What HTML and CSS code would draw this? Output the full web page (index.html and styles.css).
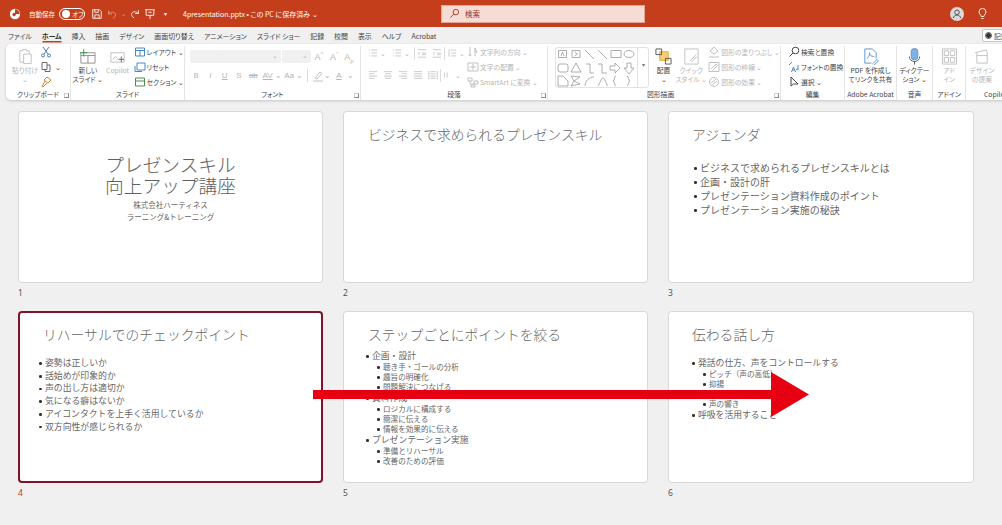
FILE: index.html
```html
<!DOCTYPE html>
<html lang="ja">
<head>
    <meta charset="UTF-8">
    <title>4presentation.pptx - PowerPoint</title>
    <link rel="stylesheet" href="styles.css">
</head>
<body>
    <!-- title bar -->
    <div class="titlebar">
        <svg class="qa logo" viewBox="0 0 14 14"><circle cx="7" cy="7" r="6" fill="#fff"/><path d="M7 7V1.5A5.5 5.5 0 0 1 12.5 7z" fill="#c43e1c"/><circle cx="6" cy="7.5" r="2" fill="#c43e1c"/></svg>
        <span class="autosave">自動保存</span>
        <span class="toggle"><i class="knob"></i>オフ</span>
        <svg class="qa save" viewBox="0 0 14 14"><path d="M2 2h8l2 2v8H2zM4.5 2v3h4V2M4.500 12V8h5v4"/></svg>
        <svg class="qa undo dim" viewBox="0 0 14 14"><path d="M3 3v4h4M3 7c2-3 8-3 8 1 0 2-1 3-3 4"/></svg>
        <span class="tiny-arrow dim">⌄</span>
        <svg class="qa redo" viewBox="0 0 14 14"><path d="M11 2.5v4H7M11 6.5c-2-3-8-3-8 1 0 2 1 3 3 4"/></svg>
        <svg class="qa present" viewBox="0 0 14 14"><path d="M1.5 2h11M2.5 2v6.500h9V2M7 8.500V13M5 5h4"/></svg>
        <span class="tiny-arrow more">▾</span>
        <span class="filename">4presentation.pptx • この PC に保存済み ⌄</span>
        <div class="search">
            <svg class="search-icon" viewBox="0 0 12 12"><circle cx="7.5" cy="4.5" r="3"/><path d="M5.3 6.7 1.5 10.5"/></svg>
            <span>検索</span>
        </div>
        <div class="title-right">
            <svg class="avatar" viewBox="0 0 14 14"><circle cx="7" cy="7" r="7" fill="#d9d9d9"/><circle cx="7" cy="5.3" r="2.3" fill="none" stroke="#555"/><path d="M3.3 11c.5-2 2-2.900 3.700-2.900s3.200.9 3.700 2.900" fill="none" stroke="#555"/></svg>
            <svg class="bulb" viewBox="0 0 12 14"><path d="M6 1.5a3.800 3.800 0 0 1 3.800 3.800c0 2-2 3-2.300 5H4.500c-.3-2-2.300-3-2.300-5A3.800 3.800 0 0 1 6 1.500zM4.800 12.500h2.400"/></svg>
        </div>
    </div>

    <!-- tabs -->
    <div class="tabs">
        <span>ファイル</span>
        <span class="active">ホーム</span>
        <span>挿入</span>
        <span>描画</span>
        <span>デザイン</span>
        <span>画面切り替え</span>
        <span>アニメーション</span>
        <span>スライド ショー</span>
        <span>記録</span>
        <span>校閲</span>
        <span>表示</span>
        <span>ヘルプ</span>
        <span>Acrobat</span>
        <div class="record"><i class="record-dot"></i>記録</div>
    </div>

    <!-- ribbon -->
    <div class="ribbon">
        <div class="group g-clip">
            <div class="group-body">
                <div class="big off w-paste">
                    <svg class="ic-big" viewBox="0 0 18 18"><path d="M3 3h3V1.500h4V3h3v3M3 3v12h4M7 6.500h8V16.500H7z"/></svg>
                    <span class="big-text">貼り付け<br>⌄</span>
                </div>
                <div class="stack clip-stack">
                    <svg class="ic cut" viewBox="0 0 12 12"><path d="M3 1l5 7M9 1L4 8"/><circle cx="3" cy="9.500" r="1.500"/><circle cx="9" cy="9.500" r="1.500"/></svg>
                    <div class="row"><svg class="ic off-ic" viewBox="0 0 12 12"><path d="M2 1.500h5v7H2zM7 4h3v6.500H5v-2"/></svg><span class="chev">⌄</span></div>
                    <svg class="ic brush" viewBox="0 0 12 12"><path d="M7 1l4 3-3 3-4-3zM5 5 2 10.500l1 .5 4-4"/></svg>
                </div>
            </div>
            <div class="group-label">クリップボード<i class="launcher"></i></div>
        </div>

        <div class="group g-slide">
            <div class="group-body">
                <div class="big w-new">
                    <svg class="ic-big new-ic" viewBox="0 0 18 18"><path d="M2 5h15v11H2zM2 8h15M9.500 8v8"/><path class="green" d="M5 1v8M1 5h8"/></svg>
                    <span class="big-text">新しい<br>スライド ⌄</span>
                </div>
                <div class="big off w-copilot">
                    <svg class="ic-big" viewBox="0 0 18 18"><path d="M2 5h14v10H2zM4 12l3-3 2 2"/><path class="dark" d="M13 9v6M10 12h6"/></svg>
                    <span class="big-text">Copilot</span>
                </div>
                <div class="stack slide-stack">
                    <div class="row"><svg class="ic blue" viewBox="0 0 12 12"><path d="M1.500 2h9v8h-9zM1.500 4.500h9M6 4.500V10"/></svg>レイアウト ⌄</div>
                    <div class="row"><svg class="ic blue" viewBox="0 0 12 12"><path d="M3 2h8v7H3zM1 5v5.500h7"/></svg>リセット</div>
                    <div class="row"><svg class="ic green-ic" viewBox="0 0 12 12"><path d="M1.500 2h9v8h-9zM1.500 5h9"/></svg>セクション ⌄</div>
                </div>
            </div>
            <div class="group-label">スライド</div>
        </div>

        <div class="group g-font off-body">
            <div class="group-body column">
                <div class="row font-top">
                    <span class="combo c-name">⌄</span>
                    <span class="combo c-size">⌄</span>
                    <span class="f-btn">A<sup>^</sup></span>
                    <span class="f-btn">A<sup>ˇ</sup></span>
                    <span class="f-btn">A<sub>p</sub></span>
                </div>
                <div class="row font-bottom">
                    <b>B</b><i>I</i><u>U</u><span>S</span><s>ab</s><span class="under">AV</span><span class="narrow">⌄</span><span class="aa">Aa ⌄</span><em class="sep"></em>
                    <svg class="ic" viewBox="0 0 12 12"><path d="M3 8l5-6 2 1.500L5 9zM1 11h10"/></svg><span class="narrow">⌄</span>
                    <span class="under">A</span><span class="narrow">⌄</span>
                </div>
            </div>
            <div class="group-label">フォント<i class="launcher"></i></div>
        </div>

        <div class="group g-para off-body">
            <div class="group-body">
                <div class="para-left">
                    <div class="row para-row">
                        <svg class="ic" viewBox="0 0 12 12"><path d="M1 2.500h1M4 2.500h7M1 6h1M4 6h7M1 9.500h1M4 9.500h7"/></svg><span class="chev chev-gap">⌄</span>
                        <svg class="ic" viewBox="0 0 12 12"><path d="M1 2.500h1M4 2.500h7M1 6h1M4 6h7M1 9.500h1M4 9.500h7"/></svg><span class="chev">⌄</span>
                        <em class="sep"></em>
                        <svg class="ic" viewBox="0 0 12 12"><path d="M1 2h10M6 6h5M6 8h5M1 11h10M3.500 5 1.500 6.500l2 1.500"/></svg>
                        <svg class="ic" viewBox="0 0 12 12"><path d="M1 2h10M6 6h5M6 8h5M1 11h10M1.500 5l2 1.500-2 1.500"/></svg>
                        <em class="sep"></em>
                        <svg class="ic" viewBox="0 0 12 12"><path d="M5 2.500h6M5 6h6M5 9.500h6M2.500 1.500v9"/></svg><span class="chev">⌄</span>
                    </div>
                    <div class="row para-row">
                        <svg class="ic" viewBox="0 0 12 12"><path d="M1 2h10M1 4.700h7M1 7.400h10M1 10h7"/></svg>
                        <svg class="ic" viewBox="0 0 12 12"><path d="M1 2h10M2.500 4.700h7M1 7.400h10M2.500 10h7"/></svg>
                        <svg class="ic" viewBox="0 0 12 12"><path d="M1 2h10M4 4.700h7M1 7.400h10M4 10h7"/></svg>
                        <svg class="ic" viewBox="0 0 12 12"><path d="M1 2h10M1 4.700h10M1 7.400h10M1 10h10"/></svg>
                        <svg class="ic" viewBox="0 0 12 12"><path d="M1 1v10M11 1v10M3 2h6M3 4.700h6M3 7.400h6M3 10h6"/></svg>
                        <em class="sep"></em>
                        <svg class="ic" viewBox="0 0 12 12"><path d="M2 3v6M5 3v6"/></svg><span class="chev">⌄</span>
                    </div>
                </div>
                <div class="stack">
                    <div class="row"><svg class="ic" viewBox="0 0 12 12"><path d="M3 1v9M1.500 8.500 3 10l1.500-1.500M8 10V2l2 5"/></svg>文字列の方向 ⌄</div>
                    <div class="row"><svg class="ic" viewBox="0 0 12 12"><path d="M1 2h10v8H1zM3 6h6M6 3v6"/></svg>文字の配置 ⌄</div>
                    <div class="row"><svg class="ic" viewBox="0 0 12 12"><path d="M1 2h4v3H1zM7 5h4v3H7zM3 5v3h4M4 9h4v2H4z"/></svg>SmartArt に変換 ⌄</div>
                </div>
            </div>
            <div class="group-label">段落<i class="launcher"></i></div>
        </div>

        <div class="group g-shape">
            <div class="group-body">
                <div class="gallery">
                    <svg class="gallery-shapes" viewBox="0 0 78 39">
                        <path d="M1.500 2.500h8v7h-8zM4 8l1.500-4L7 8M15 2.500h8v7h-8zM17.500 4l3 2-3 2M28 2l9 9M41 2l9 9M54 2.500h10v7H54z"/>
                        <ellipse cx="72" cy="6" rx="5" ry="3.500"/>
                        <rect x="1" y="16" width="10" height="8" rx="2"/>
                        <path d="M19 15l5 9H14zM29 16h4v9h4M41 16h4v9h5M53 18h5v-3l5 5-5 5v-3h-5zM70 15h4v5h3l-5 6-5-6h3z"/>
                        <path d="M1 28h5l5 5v5H1zM14 28l9 1-6 4 6 3-9 2 3-5zM28 38c0-5 4-9 9-9M41 38c2-2 3-8 5-8s3 6 5 8M59 28c-2 0-1 5-3 5 2 0 1 5 3 5M70 28c2 0 1 5 3 5-2 0-1 5-3 5"/>
                    </svg>
                    <div class="gallery-scroll">▾</div>
                </div>
                <div class="big w-arrange">
                    <svg class="ic-big arrange" viewBox="0 0 18 18"><rect class="gold" x="5" y="4" width="9" height="9"/><path d="M1 1h6v6H1zM11 11h6v6h-6z"/></svg>
                    <span class="big-text">配置<br>⌄</span>
                </div>
                <div class="big off w-quick">
                    <svg class="ic-big" viewBox="0 0 18 18"><path d="M2 1h14v16H2zM7 14l7-7M9 15l6-6"/></svg>
                    <span class="big-text">クイック<br>スタイル ⌄</span>
                </div>
                <div class="stack shape-stack off">
                    <div class="row"><svg class="ic" viewBox="0 0 12 12"><path d="M6 1l4 4-4 3-4-3zM1 11h10"/></svg>図形の塗りつぶし ⌄</div>
                    <div class="row"><svg class="ic" viewBox="0 0 12 12"><path d="M1 1.500h10v9H1zM3 8l5-5 1.500 1.500-5 5"/></svg>図形の枠線 ⌄</div>
                    <div class="row"><svg class="ic" viewBox="0 0 12 12"><circle cx="6" cy="6" r="4.500"/><path d="M3 7l5-4M4 9l5-4"/></svg>図形の効果 ⌄</div>
                </div>
            </div>
            <div class="group-label shape-label">図形描画<i class="launcher"></i></div>
        </div>

        <div class="group g-edit">
            <div class="group-body">
                <div class="stack edit-stack">
                    <div class="row"><svg class="ic dark-ic" viewBox="0 0 12 12"><circle cx="7.500" cy="4.500" r="3.300"/><path d="M5 7 1.500 10.500"/></svg>検索と置換</div>
                    <div class="row"><svg class="ic blue" viewBox="0 0 12 12"><path d="M1 4l3-3M3.500 11l2-5 2 5M4.500 9h2M10 4v5l-2-1"/></svg>フォントの置換</div>
                    <div class="row"><svg class="ic dark-ic" viewBox="0 0 12 12"><path d="M3 1v9l2.500-2H10z"/></svg>選択 ⌄</div>
                </div>
            </div>
            <div class="group-label">編集</div>
        </div>

        <div class="group g-adobe">
            <div class="group-body center">
                <div class="big">
                    <svg class="ic-big pdf" viewBox="0 0 18 18"><path d="M3 1h8l4 4v6M3 1v15h7M5 11c2-1 3-3 3-6 0 3 2 4 5 4M11 17l5-5 1.500 1.500-5 5"/></svg>
                    <span class="big-text">PDF を作成し<br>てリンクを共有</span>
                </div>
            </div>
            <div class="group-label">Adobe Acrobat</div>
        </div>

        <div class="group g-voice">
            <div class="group-body center">
                <div class="big">
                    <svg class="ic-big mic" viewBox="0 0 18 18"><rect x="5.500" y="0.500" width="7" height="12" rx="3.500" fill="#7fb2e5" stroke="#5a93cf"/><path d="M3.500 9c0 7 11 7 11 0M9 14v3.500"/></svg>
                    <span class="big-text">ディクテー<br>ション ⌄</span>
                </div>
            </div>
            <div class="group-label">音声</div>
        </div>

        <div class="group g-addin off-body">
            <div class="group-body center">
                <div class="big">
                    <svg class="ic-big" viewBox="0 0 18 18"><path d="M1.500 1h15v16h-15zM3.500 3h4.500v5H3.500zM10 3h4.500v5H10zM3.500 10h4.500v5H3.500zM10 10h4.500v5H10z"/></svg>
                    <span class="big-text">アド<br>イン</span>
                </div>
            </div>
            <div class="group-label label-on">アドイン</div>
        </div>

        <div class="group g-copilot off-body">
            <div class="group-body">
                <div class="big w-design">
                    <svg class="ic-big" viewBox="0 0 18 18"><path d="M1 5l12-3 1 3v11H3V5M3 8h11"/></svg>
                    <span class="big-text">デザイン<br>の提案</span>
                </div>
                <div class="big w-copilot2">
                    <svg class="ic-big" viewBox="0 0 18 18"><circle cx="9" cy="9" r="7"/></svg>
                    <span class="big-text">Copilot</span>
                </div>
            </div>
            <div class="group-label label-on copilot-label">Copilot</div>
        </div>
    </div>

    <!-- slide sorter -->
    <div class="sorter">
        <div class="item">
            <div class="slide slide-cover">
                <div class="cover-title">プレゼンスキル<br>向上アップ講座</div>
                <div class="cover-sub">株式会社ハーティネス<br>ラーニング&amp;トレーニング</div>
            </div>
            <div class="num">1</div>
        </div>
        <div class="item">
            <div class="slide">
                <div class="slide-title">ビジネスで求められるプレゼンスキル</div>
            </div>
            <div class="num">2</div>
        </div>
        <div class="item">
            <div class="slide">
                <div class="slide-title">アジェンダ</div>
                <ul class="list list-agenda">
                    <li>ビジネスで求められるプレゼンスキルとは</li>
                    <li>企画・設計の肝</li>
                    <li>プレゼンテーション資料作成のポイント</li>
                    <li>プレゼンテーション実施の秘訣</li>
                </ul>
            </div>
            <div class="num">3</div>
        </div>
        <div class="item selected">
            <div class="slide">
                <div class="slide-title">リハーサルでのチェックポイント</div>
                <ul class="list list-check">
                    <li>姿勢は正しいか</li>
                    <li>話始めが印象的か</li>
                    <li>声の出し方は適切か</li>
                    <li>気になる癖はないか</li>
                    <li>アイコンタクトを上手く活用しているか</li>
                    <li>双方向性が感じられるか</li>
                </ul>
            </div>
            <div class="num">4</div>
        </div>
        <div class="item">
            <div class="slide">
                <div class="slide-title">ステップごとにポイントを絞る</div>
                <ul class="list list-steps">
                    <li>企画・設計</li>
                    <li class="sub">聴き手・ゴールの分析</li>
                    <li class="sub">趣旨の明確化</li>
                    <li class="sub">問題解決につなげる</li>
                    <li>資料作成</li>
                    <li class="sub">ロジカルに構成する</li>
                    <li class="sub">簡潔に伝える</li>
                    <li class="sub">情報を効果的に伝える</li>
                    <li>プレゼンテーション実施</li>
                    <li class="sub">準備とリハーサル</li>
                    <li class="sub">改善のための評価</li>
                </ul>
            </div>
            <div class="num">5</div>
        </div>
        <div class="item">
            <div class="slide">
                <div class="slide-title">伝わる話し方</div>
                <ul class="list list-talk">
                    <li>発話の仕方、声をコントロールする</li>
                    <li class="sub">ピッチ（声の高低）</li>
                    <li class="sub">抑揚</li>
                    <li class="sub">強調</li>
                    <li class="sub">声の響き</li>
                    <li>呼吸を活用すること</li>
                </ul>
            </div>
            <div class="num">6</div>
        </div>
    </div>

    <!-- red arrow lying over the slides -->
    <svg class="big-arrow" viewBox="0 0 496 45"><path d="M0 18h458V0l38 22.500L458 45V27H0z"/></svg>
</body>
</html>
```

FILE: styles.css
```css
* {
    margin: 0;
    padding: 0;
    box-sizing: border-box;
}

body {
    width: 1002px;
    height: 525px;
    overflow: hidden;
    position: relative;
    background: #f0f0f0;
    font-family: "Noto Sans CJK JP", "Noto Sans", sans-serif;
    font-size: 7px;
    color: #444;
    display: flex;
    flex-direction: column;
}

svg {
    flex: none;
    display: block;
}

/* title bar */
.titlebar {
    height: 27px;
    flex: none;
    background: #c43e1c;
    color: #fff;
    display: flex;
    align-items: center;
    font-feature-settings: "palt";
    font-size: 6.5px;
}

.qa {
    width: 12px;
    height: 12px;
    fill: none;
    stroke: #fff;
}

.logo {
    margin-left: 9px;
    stroke: none;
}

.autosave {
    margin-left: 8px;
    width: 30px;
}

.toggle {
    width: 26px;
    height: 12px;
    border: 1px solid #fff;
    border-radius: 6px;
    display: flex;
    align-items: center;
    gap: 2px;
    padding-left: 2px;
    white-space: nowrap;
}

.knob {
    flex: none;
    width: 8px;
    height: 8px;
    border-radius: 50%;
    background: #fff;
}

.save {
    margin-left: 6px;
}

.undo {
    margin-left: 3px;
}

.dim {
    opacity: 0.5;
}

.tiny-arrow {
    width: 11px;
    text-align: center;
    font-size: 6px;
}

.present {
    margin-left: 3px;
}

.more {
    margin-left: 4px;
}

.filename {
    margin-left: 12px;
    width: 258px;
    font-size: 7px;
}

.search {
    width: 204px;
    height: 18px;
    background: #f6dcd5;
    border: 1px solid #e2a897;
    color: #9c3418;
    display: flex;
    align-items: center;
    gap: 5px;
    padding-left: 7px;
    font-size: 7.5px;
}

.search-icon {
    width: 11px;
    height: 11px;
    fill: none;
    stroke: #a33a1e;
}

.title-right {
    margin-left: auto;
    display: flex;
    align-items: center;
    gap: 13px;
    padding-right: 14px;
}

.avatar {
    width: 14px;
    height: 14px;
}

.bulb {
    width: 11px;
    height: 13px;
    fill: none;
    stroke: #fff;
}

/* tabs */
.tabs {
    height: 17px;
    flex: none;
    display: flex;
    align-items: center;
    gap: 10px;
    padding-left: 8px;
    font-size: 6.9px;
    font-feature-settings: "palt";
    color: #444;
    position: relative;
}

.tabs .active {
    font-weight: 700;
    color: #333;
    box-shadow: 0 2px 0 -0.5px #c43e1c;
}

.record {
    position: absolute;
    left: 982px;
    top: 2px;
    width: 40px;
    height: 13px;
    background: #fff;
    border: 1px solid #c8c8c8;
    border-radius: 2px;
    display: flex;
    align-items: center;
    gap: 2px;
    padding-left: 2px;
}

.record-dot {
    width: 7px;
    height: 7px;
    border-radius: 50%;
    background: #333;
    border: 1.5px solid #fff;
    outline: 1px solid #555;
    outline-offset: -1px;
}

/* ribbon */
.ribbon {
    height: 56px;
    width: 1010px;
    flex: none;
    margin-left: 6px;
    background: #fff;
    border-radius: 5px;
    box-shadow: 0 1px 3px rgba(0,0,0,0.18);
    display: flex;
    padding-top: 2px;
    font-size: 6.8px;
    font-feature-settings: "palt";
}

.group {
    display: flex;
    flex-direction: column;
    flex: none;
    border-right: 1px solid #e4e4e4;
}

.group-body {
    flex: 1;
    display: flex;
    min-height: 0;
}

.group-body.column {
    flex-direction: column;
}

.group-body.center {
    justify-content: center;
}

.group-label {
    height: 11px;
    line-height: 11px;
    text-align: center;
    position: relative;
    color: #444;
    white-space: nowrap;
    overflow: hidden;
}

.launcher {
    position: absolute;
    right: 1px;
    top: 4px;
    width: 5px;
    height: 5px;
    border: 1px solid #888;
    border-top-color: #ccc;
    border-left-color: #ccc;
}

.g-clip { width: 65px; }
.g-slide { width: 114px; }
.g-font { width: 176px; }
.g-para { width: 187px; }
.g-shape { width: 233px; }
.g-edit { width: 64px; }
.g-adobe { width: 52px; }
.g-voice { width: 36px; }
.g-addin { width: 33px; }
.g-copilot { width: 70px; border-right: 0; }

.off,
.off-body .group-body {
    color: #b4b4b4;
}

.label-on {
    color: #444;
}

.row {
    display: flex;
    align-items: center;
}

.stack {
    display: flex;
    flex-direction: column;
    gap: 3px;
    white-space: nowrap;
}

.stack .row {
    height: 12px;
    gap: 1px;
}

.big {
    display: flex;
    flex-direction: column;
    align-items: center;
    text-align: center;
    line-height: 9px;
    white-space: nowrap;
    padding-top: 2px;
}

.big-text {
    margin-top: 1px;
}

.ic-big {
    width: 17px;
    height: 17px;
    fill: none;
    stroke: #8f8f8f;
}

.ic {
    width: 12px;
    height: 12px;
    fill: none;
    stroke: #777;
}

.off .ic-big,
.off .ic,
.off-body .ic,
.off-body .ic-big {
    stroke: #c0c0c0;
}

.off-ic { stroke: #6a6a6a; }
.cut { stroke: #4a7fb5; }
.brush { stroke: #c98a2c; }
.blue { stroke: #4a86c5; }
.green-ic { stroke: #4e8a55; }
.dark-ic { stroke: #444; }

.chev {
    font-size: 7px;
    line-height: 8px;
    width: 10px;
    text-align: center;
    flex: none;
}

/* clipboard */
.w-paste {
    width: 30px;
    margin-left: 4px;
}

/* slide group */
.w-new {
    width: 34px;
}

.new-ic .green {
    stroke: #3c9a4b;
}

.w-copilot {
    width: 26px;
}

.w-copilot .dark {
    stroke: #666;
}

.slide-stack {
    margin-left: 3px;
}

/* font group */
.font-top {
    margin: 4px 0 0 5px;
    height: 13px;
    gap: 1px;
}

.combo {
    height: 13px;
    background: #f0f0f0;
    border-radius: 2px;
    color: #b4b4b4;
    text-align: right;
    padding-right: 3px;
    line-height: 11px;
}

.c-name { width: 91px; }
.c-size { width: 29px; }

.f-btn {
    width: 14px;
    text-align: center;
    font-size: 9px;
    font-family: "Liberation Sans", sans-serif;
}

.f-btn sup,
.f-btn sub {
    font-size: 6px;
    line-height: 0;
}

.font-bottom {
    margin: 6px 0 0 4px;
    height: 13px;
    font-family: "Liberation Sans", sans-serif;
    font-size: 8px;
}

.font-bottom > * {
    flex: none;
    width: 14.3px;
    text-align: center;
}

.font-bottom .narrow {
    width: 8px;
}

.font-bottom .aa {
    width: 22px;
}

.font-bottom svg {
    width: 12px;
}

.font-bottom .sep {
    width: 1px;
    margin: 0 4px 0 2px;
}

.font-bottom em,
.para-row em {
    display: block;
    height: 13px;
    background: #ddd;
}

.font-bottom i,
.font-bottom b {
    font-weight: 400;
}

.under {
    text-decoration: underline;
}

/* paragraph group */
.para-left {
    width: 106px;
    padding-left: 7px;
}

.para-row {
    height: 14px;
    margin-bottom: 8px;
}

.para-row .ic {
    width: 10px;
    height: 10px;
}

.para-row .ic + .ic {
    margin-left: 5px;
}

.para-row .chev-gap {
    margin-right: 4px;
}

.para-row .sep {
    width: 1px;
    margin: 0 2px;
}

/* shapes group */
.gallery {
    margin: 1px 0 0 7px;
    width: 94px;
    height: 41px;
    flex: none;
    border: 1px solid #e2e2e2;
    border-radius: 3px;
    display: flex;
}

.gallery-shapes {
    width: 78px;
    height: 39px;
    margin-left: 1px;
    fill: none;
    stroke: #9a9a9a;
    stroke-width: 0.8;
}

.gallery-scroll {
    margin-left: 2px;
    flex: 1;
    border-left: 1px solid #e2e2e2;
    text-align: center;
    line-height: 34px;
    font-size: 6px;
    color: #777;
}

.w-arrange {
    width: 28px;
    margin-left: 1px;
}

.arrange {
    stroke: #555;
}

.arrange .gold {
    fill: #f7cf75;
    stroke: #e6a93a;
}

.w-quick {
    width: 28px;
}

.shape-stack {
    margin-left: 3px;
}

.shape-label {
    text-align: left;
    padding-left: 99px;
}

/* edit group */
.edit-stack {
    margin-left: 7px;
}

.pdf {
    stroke: #5a93cf;
}

.mic {
    stroke: #555;
}

/* copilot group */
.w-design {
    width: 32px;
}

.w-copilot2 {
    margin-left: 1px;
    width: 30px;
}

.copilot-label {
    text-align: left;
    padding-left: 18px;
}

/* slide sorter */
.sorter {
    flex: 1;
    display: grid;
    grid-template-columns: 305px 305px 306px;
    grid-auto-rows: 189px;
    gap: 11px 20px;
    padding: 11px 0 0 18px;
}

.slide {
    height: 172px;
    background: #fff;
    border-radius: 4px;
    box-shadow: inset 0 0 0 1px #d8d8d8;
    padding: 13px 0 0 25px;
}

.item:nth-child(3n) .slide {
    padding-left: 24px;
}

.selected .slide {
    box-shadow: inset 0 0 0 2px #7e1424;
}

.num {
    font-family: "Noto Sans", sans-serif;
    font-size: 8.5px;
    line-height: 19px;
    color: #555;
}

.selected .num {
    color: #c43e1c;
}

.slide-title {
    font-size: 13.8px;
    line-height: 20px;
    font-weight: 300;
    color: #666;
    white-space: nowrap;
}

.slide-cover {
    padding: 42px 0 0;
    text-align: center;
}

.cover-title {
    font-size: 18.7px;
    line-height: 21px;
    font-weight: 300;
    color: #606060;
}

.cover-sub {
    margin-top: 4px;
    font-size: 7.5px;
    line-height: 12px;
    color: #666;
}

.list {
    list-style: none;
    color: #666;
}

.list li {
    position: relative;
    white-space: nowrap;
    padding-left: 6px;
}

.list li::before {
    content: "";
    position: absolute;
    left: 0;
    top: 50%;
    width: 2.5px;
    height: 2.5px;
    margin-top: -1px;
    border-radius: 50%;
    background: #333;
}

.list .sub {
    margin-left: 11px;
    font-size: 7.6px;
    line-height: 10px;
}

.list-agenda {
    margin: 17px 0 0 2px;
    font-size: 10px;
    line-height: 14px;
}

.list-check {
    margin: 13px 0 0 -4px;
    font-size: 8.85px;
    line-height: 12.7px;
}

.list-steps {
    margin: 6px 0 0 -2px;
    font-size: 8.8px;
    line-height: 12px;
}

.list-talk {
    margin-top: 13px;
    font-size: 8.8px;
    line-height: 12px;
}

.big-arrow {
    position: absolute;
    left: 313px;
    top: 372px;
    width: 496px;
    height: 45px;
    fill: #e60012;
}
```
